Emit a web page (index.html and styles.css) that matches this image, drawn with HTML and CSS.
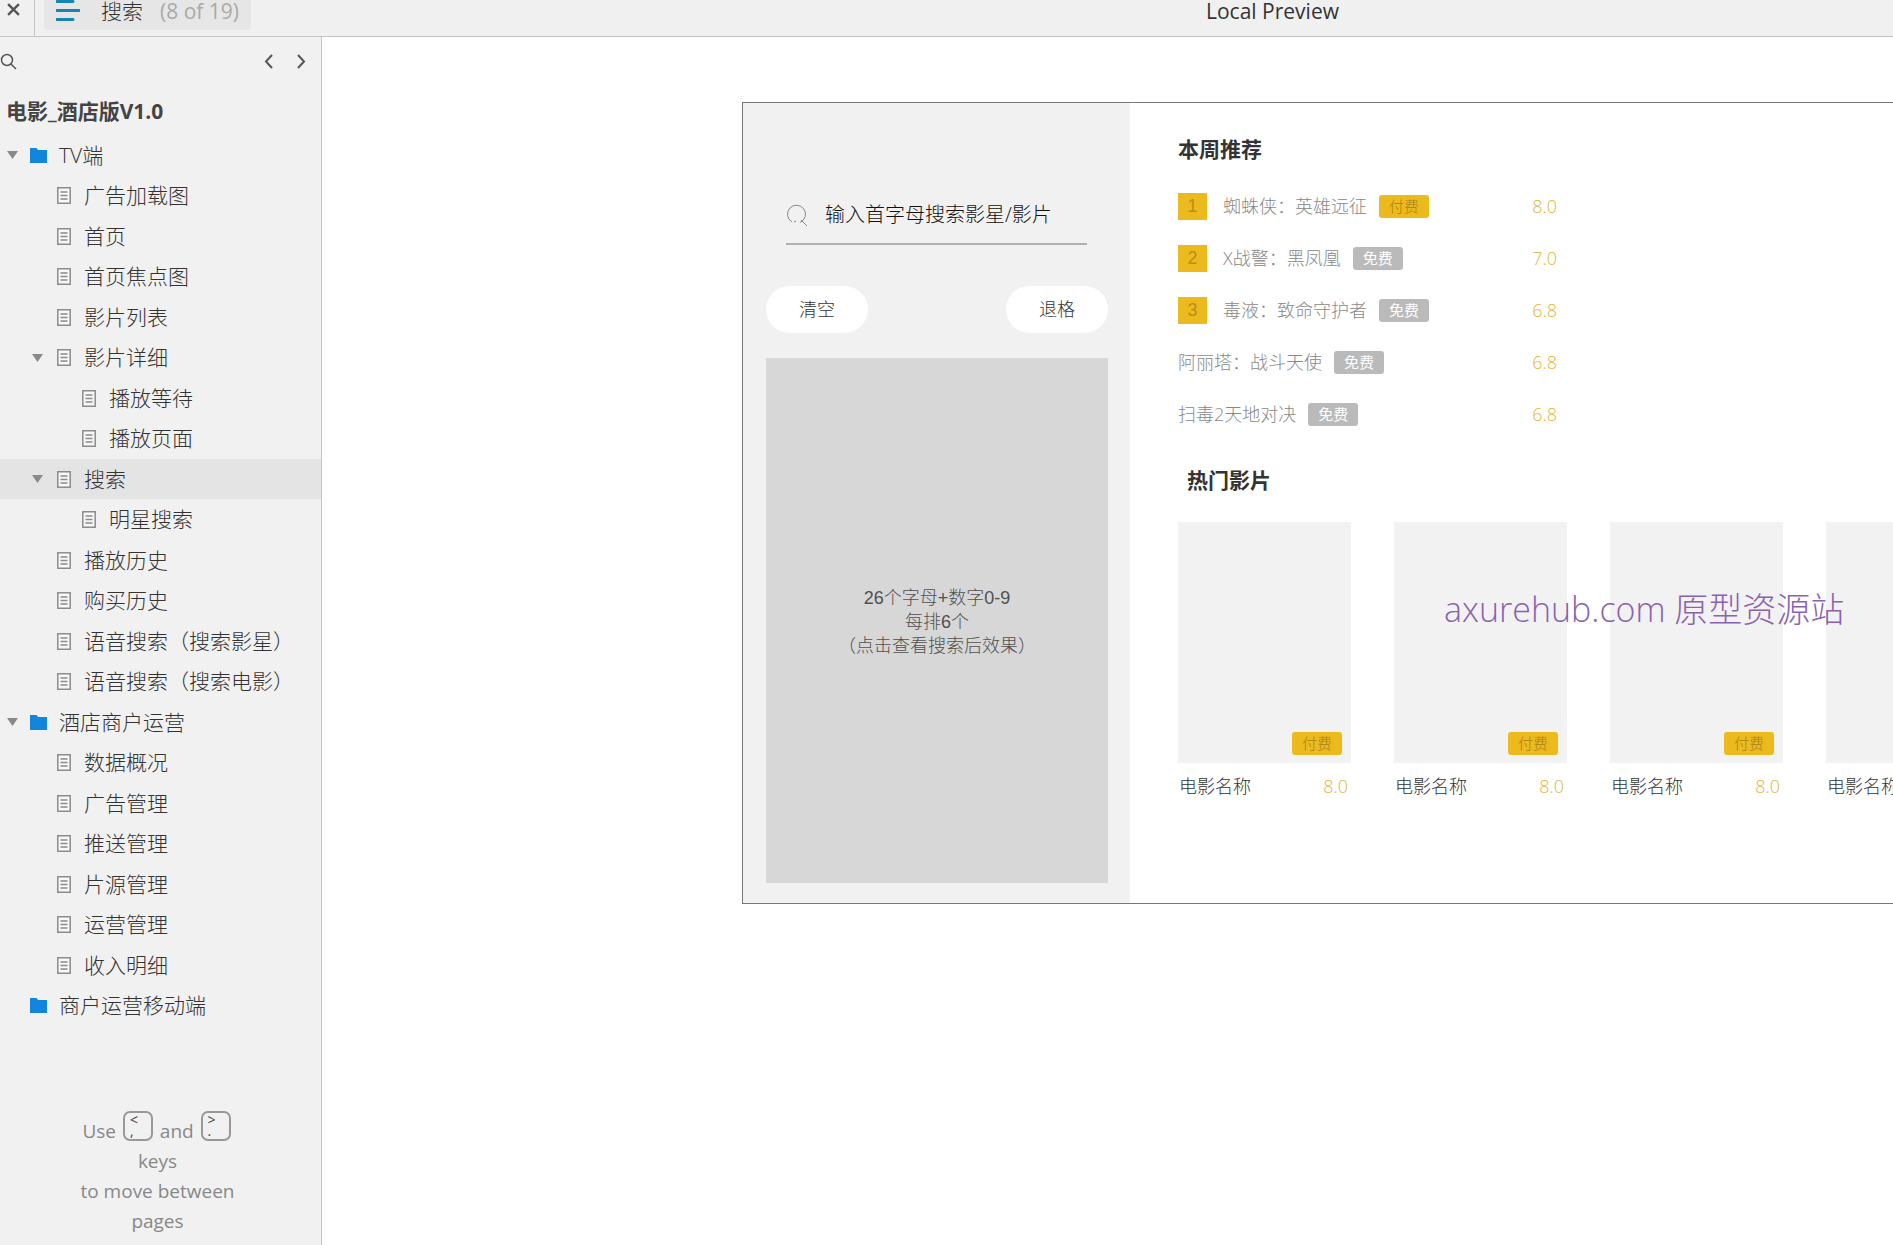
FILE: index.html
```html
<!DOCTYPE html>
<html lang="zh-CN">
<head>
<meta charset="utf-8">
<meta name="viewport" content="width=device-width, initial-scale=1">
<title>搜索 - Local Preview</title>
<link rel="stylesheet" href="styles.css">
</head>
<body>
<svg class="sprite" aria-hidden="true">
  <symbol id="page" viewBox="0 0 14 17"><path d="M.8.8h12.4v15.4H.8z" fill="#f7f7f7" stroke="#8c8c8c" stroke-width="1.5"/><path d="M3.500 5h7M3.500 8.500h7M3.500 12h7" stroke="#8c8c8c" stroke-width="1.300"/></symbol>
  <symbol id="folder" viewBox="0 0 17 15"><path d="M0 0h6.500l1.500 2H17v13H0z" fill="#1286dc"/></symbol>
  <symbol id="caret" viewBox="0 0 11 8"><path d="M0 0h11L5.500 8z" fill="#8a8a8a"/></symbol>
</svg>
<header class="topbar">
  <button class="close" aria-label="关闭"><svg width="13" height="13" viewBox="0 0 12 12"><path d="M1 1l10 10M11 1L1 11" stroke="#555" stroke-width="2.200"/></svg></button>
  <button class="current">
    <svg width="24" height="21" viewBox="0 0 24 21"><path d="M1 1.500h16M1 10.500h22M1 19.500h16" stroke="#1784b4" stroke-width="3" stroke-linecap="round"/></svg>
    <span class="current-name">搜索</span>
    <span class="current-count">(8 of 19)</span>
  </button>
  <h1 class="project">Local Preview</h1>
</header>
<div class="workspace">
  <aside class="sidebar">
    <div class="tools">
      <button class="tool" aria-label="搜索页面"><svg width="17" height="17" viewBox="0 0 17 17" fill="none" stroke="#555" stroke-width="1.500"><circle cx="7" cy="7" r="5.500"/><path d="M11 11l5 5"/></svg></button>
      <button class="tool prev" aria-label="上一页"><svg width="9" height="15" viewBox="0 0 9 15" fill="none" stroke="#555" stroke-width="2"><path d="M8 1L2 7.500l6 6.500"/></svg></button>
      <button class="tool" aria-label="下一页"><svg width="9" height="15" viewBox="0 0 9 15" fill="none" stroke="#555" stroke-width="2"><path d="M1 1l6 6.500L1 14"/></svg></button>
    </div>
    <h2 class="title">电影_酒店版V1.0</h2>
    <nav>
      <ul class="tree">
        <li class="row folder"><svg class="caret"><use href="#caret"/></svg><svg class="icon"><use href="#folder"/></svg><a href="#">TV端</a></li>
        <li class="row"><svg class="icon"><use href="#page"/></svg><a href="#">广告加载图</a></li>
        <li class="row"><svg class="icon"><use href="#page"/></svg><a href="#">首页</a></li>
        <li class="row"><svg class="icon"><use href="#page"/></svg><a href="#">首页焦点图</a></li>
        <li class="row"><svg class="icon"><use href="#page"/></svg><a href="#">影片列表</a></li>
        <li class="row parent"><svg class="caret"><use href="#caret"/></svg><svg class="icon"><use href="#page"/></svg><a href="#">影片详细</a></li>
        <li class="row child"><svg class="icon"><use href="#page"/></svg><a href="#">播放等待</a></li>
        <li class="row child"><svg class="icon"><use href="#page"/></svg><a href="#">播放页面</a></li>
        <li class="row parent selected"><svg class="caret"><use href="#caret"/></svg><svg class="icon"><use href="#page"/></svg><a href="#">搜索</a></li>
        <li class="row child"><svg class="icon"><use href="#page"/></svg><a href="#">明星搜索</a></li>
        <li class="row"><svg class="icon"><use href="#page"/></svg><a href="#">播放历史</a></li>
        <li class="row"><svg class="icon"><use href="#page"/></svg><a href="#">购买历史</a></li>
        <li class="row"><svg class="icon"><use href="#page"/></svg><a href="#">语音搜索（搜索影星）</a></li>
        <li class="row"><svg class="icon"><use href="#page"/></svg><a href="#">语音搜索（搜索电影）</a></li>
        <li class="row folder"><svg class="caret"><use href="#caret"/></svg><svg class="icon"><use href="#folder"/></svg><a href="#">酒店商户运营</a></li>
        <li class="row"><svg class="icon"><use href="#page"/></svg><a href="#">数据概况</a></li>
        <li class="row"><svg class="icon"><use href="#page"/></svg><a href="#">广告管理</a></li>
        <li class="row"><svg class="icon"><use href="#page"/></svg><a href="#">推送管理</a></li>
        <li class="row"><svg class="icon"><use href="#page"/></svg><a href="#">片源管理</a></li>
        <li class="row"><svg class="icon"><use href="#page"/></svg><a href="#">运营管理</a></li>
        <li class="row"><svg class="icon"><use href="#page"/></svg><a href="#">收入明细</a></li>
        <li class="row folder empty"><svg class="icon"><use href="#folder"/></svg><a href="#">商户运营移动端</a></li>
      </ul>
    </nav>
    <p class="hint">Use <kbd>&lt;<br>,</kbd> and <kbd>&gt;<br>.</kbd><br>keys<br>to move between<br>pages</p>
  </aside>
  <main class="canvas">
    <div class="screen">
      <section class="search">
        <label class="field">
          <svg width="22" height="22" viewBox="0 0 22 22" fill="none" stroke="#888"><path d="M14 18.500a9 9 0 1 0-8-.5M15 16l6 6"/><circle cx="9" cy="17.500" r=".5"/></svg>
          <input type="text" aria-label="搜索" placeholder="输入首字母搜索影星/影片">
        </label>
        <div class="actions">
          <button class="pill">清空</button>
          <button class="pill">退格</button>
        </div>
        <div class="keypad">26个字母+数字0-9<br>每排6个<br>（点击查看搜索后效果）</div>
      </section>
      <section class="content">
        <h2 class="heading">本周推荐</h2>
        <ol class="ranking">
          <li><span class="rank">1</span><span class="name">蜘蛛侠：英雄远征</span><span class="tag paid">付费</span><span class="score">8.0</span></li>
          <li><span class="rank">2</span><span class="name">X战警：黑凤凰</span><span class="tag">免费</span><span class="score">7.0</span></li>
          <li><span class="rank">3</span><span class="name">毒液：致命守护者</span><span class="tag">免费</span><span class="score">6.8</span></li>
          <li><span class="name">阿丽塔：战斗天使</span><span class="tag">免费</span><span class="score">6.8</span></li>
          <li><span class="name">扫毒2天地对决</span><span class="tag">免费</span><span class="score">6.8</span></li>
        </ol>
        <h2 class="heading hot">热门影片</h2>
        <ul class="films">
          <li class="film"><div class="poster"><span class="tag paid">付费</span></div><div class="caption"><span>电影名称</span><span class="score">8.0</span></div></li>
          <li class="film"><div class="poster"><span class="tag paid">付费</span></div><div class="caption"><span>电影名称</span><span class="score">8.0</span></div></li>
          <li class="film"><div class="poster"><span class="tag paid">付费</span></div><div class="caption"><span>电影名称</span><span class="score">8.0</span></div></li>
          <li class="film"><div class="poster"></div><div class="caption"><span>电影名称</span></div></li>
        </ul>
        <p class="watermark">axurehub.com 原型资源站</p>
      </section>
    </div>
  </main>
</div>
</body>
</html>
```
FILE: styles.css
```css
* { box-sizing: border-box; }

body {
  margin: 0;
  min-height: 100vh;
  display: flex;
  flex-direction: column;
  overflow-x: hidden;
  background: #fff;
  color: #333;
  font: 300 21px/30px "Open Sans", "Noto Sans CJK SC", sans-serif;
}

h1, h2, p, ul, ol { margin: 0; padding: 0; }
ul, ol { list-style: none; }
a { color: inherit; text-decoration: none; }
svg { flex: none; display: block; }
button { font: inherit; color: inherit; border: 0; padding: 0; background: none; }
.sprite { display: none; }

/* Top bar */
.topbar {
  display: flex;
  align-items: flex-start;
  height: 37px;
  background: #f0f0f0;
  border-bottom: 1px solid #c4c4c4;
}
.close {
  width: 35px;
  height: 36px;
  padding: 3px 0 0 7px;
  border-right: 1px solid #c4c4c4;
  display: flex;
}
.current {
  display: flex;
  align-items: flex-start;
  width: 207px;
  height: 30px;
  margin-left: 9px;
  padding-left: 12px;
  background: #e6e6e6;
  border-radius: 0 0 4px 4px;
  line-height: 22px;
}
.current-name { margin-left: 21px; }
.current-count { margin-left: 17px; color: #aaa; font-weight: 400; }
.project {
  flex: 1;
  padding-left: 401px;
  text-align: center;
  font-size: 21px;
  line-height: 22px;
  font-weight: 400;
}

/* Sidebar */
.workspace { display: flex; flex: 1; }
.sidebar {
  flex: none;
  width: 322px;
  background: #f1f1f1;
  border-right: 1px solid #c4c4c4;
}
.tools {
  display: flex;
  align-items: center;
  gap: 24px;
  height: 49px;
  padding-right: 15px;
}
.prev { margin-left: auto; }
.title {
  height: 49px;
  padding-left: 6px;
  font-size: 21px;
  line-height: 50px;
  font-weight: 700;
  color: #444;
}
.tree {
  display: grid;
  grid-auto-rows: 40px 41px;
  color: #333;
}
.tree a { padding-bottom: 1px; }
.row {
  display: flex;
  align-items: center;
  padding-left: 57px;
}
.row.folder { padding-left: 7px; }
.row.empty { padding-left: 30px; }
.row.parent { padding-left: 32px; }
.row.child { padding-left: 82px; }
.row.selected { background: #e4e4e4; }
.caret { width: 11px; height: 8px; margin-right: 14px; }
.folder .caret { margin-right: 12px; }
.icon { width: 14px; height: 17px; margin-right: 13px; }
.folder .icon { width: 17px; height: 15px; margin-right: 12px; }
.hint {
  margin-top: 85px;
  padding-right: 6px;
  text-align: center;
  color: #888;
  font-size: 19px;
  font-weight: 400;
}
kbd {
  display: inline-block;
  width: 30px;
  height: 30px;
  margin: 0 2px;
  padding: 1px 0 0 5px;
  border: 2px solid #999;
  border-radius: 7px;
  color: #444;
  font: 14px/11px "Open Sans", sans-serif;
  text-align: left;
  vertical-align: 2px;
}

/* Prototype canvas */
.canvas {
  flex: 1;
  min-width: 0;
  padding: 65px 0 0 420px;
}
.screen {
  display: flex;
  border: 1px solid #777;
  border-right: 0;
}
.search {
  flex: none;
  width: 387px;
  padding: 92px 22px 20px 23px;
  background: #f1f1f1;
}
.field {
  display: flex;
  align-items: center;
  gap: 17px;
  height: 50px;
  margin: 0 21px 0 20px;
  padding-bottom: 9px;
  border-bottom: 2px solid #b0b0b0;
}
.field input {
  flex: 1;
  min-width: 0;
  padding: 0;
  border: 0;
  background: none;
  font: 300 20px/30px "Open Sans", "Noto Sans CJK SC", sans-serif;
}
.field input::placeholder { color: #111; opacity: 1; }
.actions {
  display: flex;
  justify-content: space-between;
  margin: 41px 0 25px;
}
.pill {
  width: 102px;
  height: 47px;
  padding-bottom: 2px;
  border-radius: 24px;
  background: #fff;
  font-size: 18px;
}
.keypad {
  height: 525px;
  padding-top: 228px;
  background: #d7d7d7;
  color: #505050;
  text-align: center;
  font: 300 18px/24px "Liberation Sans", "Noto Sans CJK SC", sans-serif;
}
.content {
  position: relative;
  flex: 1;
  min-width: 0;
  padding: 31px 0 0 48px;
  overflow: hidden;
}
.heading { font-size: 21px; line-height: 30px; font-weight: 700; }
.hot { padding-left: 9px; }
.ranking {
  width: 379px;
  margin: 16px 0 25px;
  color: #888;
  font-size: 18px;
}
.ranking li { display: flex; align-items: center; height: 52px; }
.rank {
  width: 29px;
  height: 27px;
  margin-right: 16px;
  background: #ecba1d;
  color: #b98f1c;
  text-align: center;
  font: 18px/27px "Liberation Sans", sans-serif;
}
.tag {
  width: 50px;
  height: 23px;
  margin-left: 12px;
  border-radius: 3px;
  background: #bababa;
  color: #fff;
  text-align: center;
  font-size: 15px;
  line-height: 23px;
  font-weight: 400;
}
.tag.paid { background: #ecba1d; color: #a88018; font-weight: 300; }
.score { margin-left: auto; color: #dfb53a; }
.films {
  display: flex;
  gap: 43px;
  margin-top: 27px;
  font-size: 18px;
}
.film { flex: none; width: 173px; }
.poster {
  display: flex;
  align-items: flex-end;
  justify-content: flex-end;
  height: 241px;
  padding: 0 9px 8px 0;
  background: #f2f2f2;
}
.caption { display: flex; padding: 8px 3px 0 1px; }
.watermark {
  position: absolute;
  left: 314px;
  top: 484px;
  color: #8a63b0;
  font-size: 34px;
  line-height: 44px;
  white-space: nowrap;
}
```
